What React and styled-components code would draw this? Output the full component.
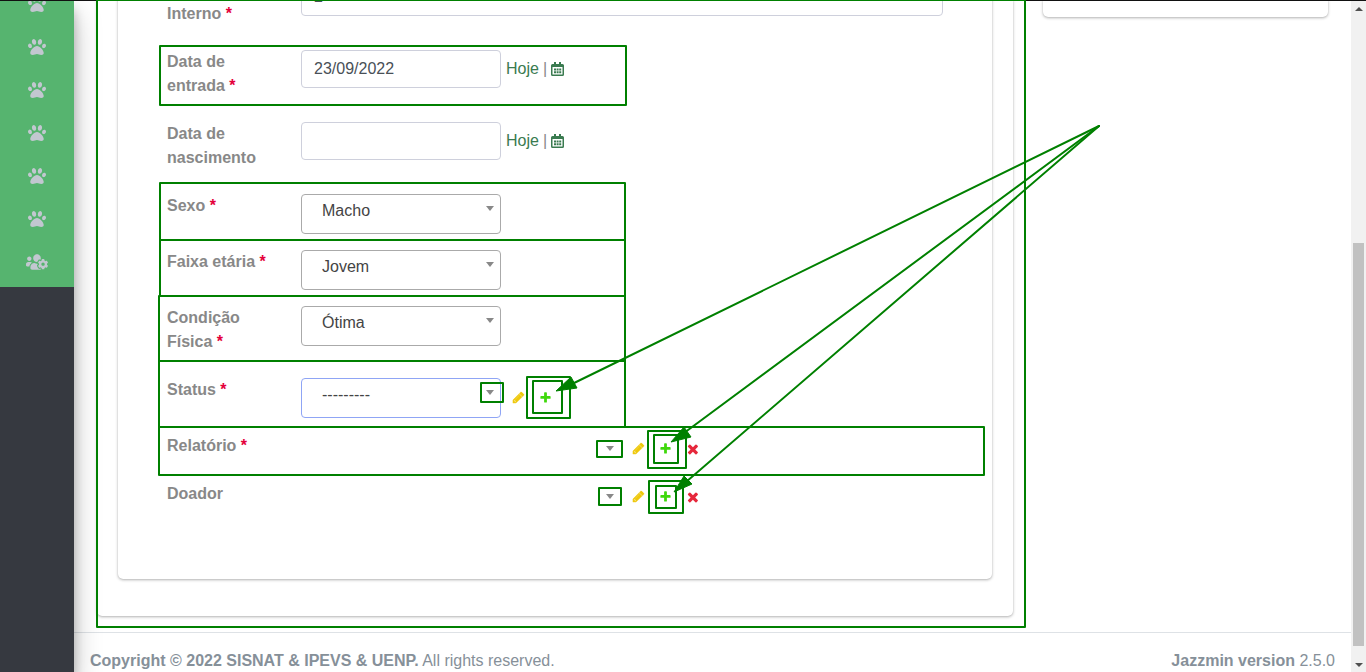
import React from "react";
import styled, { createGlobalStyle, css } from "styled-components";
import { FaPaw, FaUsersCog } from "react-icons/fa";

const GlobalStyle = createGlobalStyle`
  *, *::before, *::after { box-sizing: border-box; }
  body {
    margin: 0;
    background: #fff;
    color: #888;
    font: 16px/24px "Liberation Sans", Arial, sans-serif;
  }
`;

const Shell = styled.div`
  position: relative;
  display: flex;
  height: 100vh;
  overflow: hidden;
`;

const Sidebar = styled.aside`
  position: relative;
  z-index: 1;
  flex: 0 0 74px;
  background: #363940;
  box-shadow: 0 14px 28px rgba(0, 0, 0, 0.25), 0 10px 10px rgba(0, 0, 0, 0.22);
`;

const Nav = styled.nav`
  margin-top: -18px;
  padding-bottom: 4px;
  background: #56b46f;
`;

const NavLink = styled.a`
  display: flex;
  align-items: center;
  justify-content: center;
  height: 43px;
  color: #c2c7d0;

  svg {
    width: ${(p) => (p.$wide ? 22 : 18)}px;
    height: 18px;
  }
`;

const Page = styled.div`
  flex: 1;
  min-width: 0;
  display: flex;
  flex-direction: column;
`;

const Columns = styled.main`
  display: grid;
  grid-template-columns: minmax(0, 916fr) minmax(0, 285fr);
  align-items: start;
  gap: 30px;
  padding: 0 23px 16px;
`;

const Card = styled.section`
  border-radius: 0 0 5px 5px;
  background: #fff;
  box-shadow: 0 0 1px rgba(0, 0, 0, 0.125), 0 1px 3px rgba(0, 0, 0, 0.3);
`;

const FormCard = styled(Card)`
  padding: 0 21px 37px;
`;

const SideCard = styled(Card)`
  height: 17px;
`;

const Fieldset = styled(Card).attrs({ as: "form" })`
  margin: 0;
  padding: 0 49px;
`;

const Rows = styled.div`
  margin-top: -22px;
  padding-bottom: 49px;
`;

const Row = styled.div`
  display: grid;
  grid-template-columns: 120px minmax(0, 1fr);
  column-gap: 14px;
  align-items: start;
  margin-bottom: 16px;
`;

const Label = styled.label`
  display: block;
  padding: ${(p) => (p.$second ? 24 : 0)}px 0 8px;
  font-weight: 700;
`;

const Required = styled.span`
  color: #e4003a;
`;

const Controls = styled.div`
  display: flex;
  align-items: center;
`;

const TextInput = styled.input`
  width: ${(p) => (p.$full ? "100%" : "200px")};
  height: 38px;
  padding: 6px 12px;
  border: 1px solid #ced0dc;
  border-radius: 4px;
  background: #fff;
  color: #495057;
  font: inherit;
`;

const Shortcuts = styled.span`
  display: flex;
  align-items: center;
  gap: 4px;
  margin-left: 5px;
`;

const Link = styled.a`
  display: flex;
  color: #3a7b50;
  text-decoration: none;

  svg {
    width: 13px;
    height: 14px;
  }
`;

const SelectBox = styled.div`
  position: relative;
  width: ${(p) => (p.$bare ? 320 : 200)}px;

  &::after {
    content: "";
    position: absolute;
    top: 12px;
    right: 7px;
    border: solid transparent;
    border-width: 5px 4px 0;
    border-top-color: #888;
    pointer-events: none;
  }
`;

const Select = styled.select`
  display: block;
  width: 100%;
  height: 40px;
  padding: 0 20px 6px;
  border: 1px solid ${(p) => (p.$focused ? "#8fa5f5" : "#aaa")};
  border-radius: 4px;
  appearance: none;
  background: #fff;
  color: #444;
  font: inherit;
  ${(p) =>
    p.$bare &&
    css`
      height: 30px;
      padding: 0;
      border: 0;
    `}
`;

const Actions = styled.div`
  display: flex;
  align-items: center;
  gap: 14px;
  margin-left: 11px;
  padding-bottom: 2px;
`;

const ActionButton = styled.button`
  display: flex;
  padding: 0;
  border: 0;
  background: none;
  color: ${(p) => p.$color};

  svg {
    width: 13px;
    height: 13px;
  }
`;

const Footer = styled.footer`
  display: flex;
  justify-content: space-between;
  padding: 16px 16px 0;
  border-top: 1px solid #dee2e6;
  color: #869099;
`;

const Scrollbar = styled.div`
  flex: 0 0 15px;
  display: flex;
  flex-direction: column;
  align-items: center;
  justify-content: space-between;
  padding: 7px 0 5px;
  background: #f1f1f1;
`;

const ScrollArrow = styled.span`
  border: solid transparent;
  border-width: ${(p) => (p.$up ? "0 4px 4px" : "4px 4px 0")};
  border-top-color: ${(p) => (p.$up ? "transparent" : "#505050")};
  border-bottom-color: ${(p) => (p.$up ? "#505050" : "transparent")};
`;

const ScrollTrack = styled.div`
  flex: 1;
  display: flex;
  align-items: flex-end;
  margin: 6px 0 17px;
`;

const ScrollThumb = styled.div`
  width: 11px;
  height: 64%;
  background: #c1c1c1;
`;

const TopLine = styled.div`
  position: absolute;
  z-index: 2;
  inset: 0 0 auto;
  height: 1px;
  background: #111;
`;

const Markup = styled.svg`
  position: absolute;
  z-index: 3;
  top: 0;
  left: 0;
  width: 100%;
  height: 100%;
  overflow: visible;
  pointer-events: none;
`;

const glyphs = {
  pencil:
    "M491 1536l91-91-235-235-91 91v107h128v128h107zm523-928q0-22-22-22-10 0-17 7l-542 542q-7 7-7 17 0 22 22 22 10 0 17-7l542-542q7-7 7-17zm-54-192l416 416-832 832h-416v-416zm683 96q0 53-37 90l-166 166-416-416 166-165q36-38 90-38 53 0 91 38l235 234q37 39 37 91z",
  plus:
    "M1600 796v192q0 40-28 68t-68 28h-416v416q0 40-28 68t-68 28h-192q-40 0-68-28t-28-68v-416h-416q-40 0-68-28t-28-68v-192q0-40 28-68t68-28h416v-416q0-40 28-68t68-28h192q40 0 68 28t28 68v416h416q40 0 68 28t28 68z",
  cross:
    "M1490 1322q0 40-28 68l-136 136q-28 28-68 28t-68-28l-294-294-294 294q-28 28-68 28t-68-28l-136-136q-28-28-28-68t28-68l294-294-294-294q-28-28-28-68t28-68l136-136q28-28 68-28t68 28l294 294 294-294q28-28 68-28t68 28l136 136q28 28 28 68t-28 68l-294 294 294 294q28 28 28 68z",
};

function Glyph({ name }) {
  return (
    <svg viewBox={name === "cross" ? "80 80 1536 1536" : "0 0 1792 1792"} fill="currentColor" aria-hidden="true">
      {name === "pencil" && (
        <path d="M128 1248L1240 110L1690 560L544 1664H128z" fill="#f4e07a" stroke="#f4e07a" strokeWidth="90" strokeLinejoin="round" />
      )}
      <path d={glyphs[name]} />
    </svg>
  );
}

function CalendarIcon() {
  return (
    <svg viewBox="0 0 13 14" fill="currentColor" aria-hidden="true">
      <path
        fillRule="evenodd"
        d="M3 0h2v2h3V0h2v2h1.500a1.500 1.500 0 0 1 1.500 1.500v9a1.500 1.500 0 0 1-1.500 1.500h-10A1.500 1.500 0 0 1 0 12.500v-9A1.500 1.500 0 0 1 1.500 2H3zM1.500 5v7.500h10V5z"
      />
      <path d="M3 6.500h2v2H3zM5.600 6.500h2v2h-2zM8.200 6.500h2v2h-2zM3 9.200h2v2H3zM5.600 9.200h2v2h-2zM8.200 9.200h2v2h-2z" />
    </svg>
  );
}

function Field({ id, label, required, second, children }) {
  return (
    <Row>
      <Label htmlFor={id} $second={second}>
        {label} {required && <Required>*</Required>}
      </Label>
      <Controls>{children}</Controls>
    </Row>
  );
}

function DateField({ id, label, required, value }) {
  return (
    <Field id={id} label={label} required={required}>
      <TextInput id={id} defaultValue={value} />
      <Shortcuts>
        <Link href="#hoje">Hoje</Link>|
        <Link href="#calendario" aria-label="Calendário">
          <CalendarIcon />
        </Link>
      </Shortcuts>
    </Field>
  );
}

function SelectField({ id, label, required, value, bare, focused, actions, removable }) {
  return (
    <Field id={id} label={label} required={required}>
      <SelectBox $bare={bare}>
        <Select id={id} $bare={bare} $focused={focused}>
          {value && <option>{value}</option>}
        </Select>
      </SelectBox>
      {actions && (
        <Actions>
          <ActionButton type="button" $color="#efc80b" aria-label="Modificar">
            <Glyph name="pencil" />
          </ActionButton>
          <ActionButton type="button" $color="#3fd80c" aria-label="Adicionar">
            <Glyph name="plus" />
          </ActionButton>
          {removable && (
            <ActionButton type="button" $color="#e6283c" aria-label="Remover">
              <Glyph name="cross" />
            </ActionButton>
          )}
        </Actions>
      )}
    </Field>
  );
}

// Each box: left, top, right, bottom
const boxes = [
  [97, 0, 1025, 627],
  [160, 46, 626, 105],
  [160, 183, 625, 240],
  [160, 240, 625, 296],
  [159, 296, 625, 361],
  [159, 361, 625, 427],
  [159, 427, 984, 475],
  [481, 383, 503, 402],
  [527, 377, 570, 418],
  [533, 381, 562, 413],
  [597, 441, 622, 457],
  [648, 431, 686, 468],
  [654, 435, 678, 463],
  [599, 488, 621, 505],
  [649, 481, 683, 513],
  [656, 486, 676, 508],
];

const arrows = [
  { to: [570, 385], head: "556,391 571,377 577,388" },
  { to: [684, 433], head: "671,442 684,427 691,437" },
  { to: [686, 482], head: "674,492 684,476 692,484" },
];

function Annotations() {
  return (
    <Markup fill="none" stroke="#008000" strokeWidth="2" strokeLinejoin="round" aria-hidden="true">
      {boxes.map(([l, t, r, b]) => (
        <rect key={`${l}-${t}`} x={l} y={t} width={r - l} height={b - t} />
      ))}
      {arrows.map(({ to, head }) => (
        <g key={head}>
          <line x1="1099" y1="126" x2={to[0]} y2={to[1]} strokeLinecap="round" />
          <polygon points={head} fill="#008000" strokeWidth="1" />
        </g>
      ))}
    </Markup>
  );
}

export default function App() {
  return (
    <Shell>
      <GlobalStyle />
      <Sidebar>
        <Nav>
          {[1, 2, 3, 4, 5, 6].map((n) => (
            <NavLink key={n} href="#animais" aria-label="Animais">
              <FaPaw />
            </NavLink>
          ))}
          <NavLink href="#usuarios" aria-label="Usuários" $wide>
            <FaUsersCog />
          </NavLink>
        </Nav>
      </Sidebar>
      <Page>
        <Columns>
          <FormCard>
            <Fieldset>
              <Rows>
                <Field id="interno" label="Interno" required second>
                  <TextInput id="interno" defaultValue="2" $full />
                </Field>
                <DateField id="entrada" label="Data de entrada" required value="23/09/2022" />
                <DateField id="nascimento" label="Data de nascimento" />
                <SelectField id="sexo" label="Sexo" required value="Macho" />
                <SelectField id="faixa" label="Faixa etária" required value="Jovem" />
                <SelectField id="condicao" label="Condição Física" required value="Ótima" />
                <SelectField id="status" label="Status" required value="---------" focused actions />
                <SelectField id="relatorio" label="Relatório" required bare actions removable />
                <SelectField id="doador" label="Doador" bare actions removable />
              </Rows>
            </Fieldset>
          </FormCard>
          <SideCard />
        </Columns>
        <Footer>
          <span>
            <strong>Copyright © 2022 SISNAT &amp; IPEVS &amp; UENP.</strong> All rights reserved.
          </span>
          <span>
            <strong>Jazzmin version</strong> 2.5.0
          </span>
        </Footer>
      </Page>
      <Scrollbar aria-hidden="true">
        <ScrollArrow $up />
        <ScrollTrack>
          <ScrollThumb />
        </ScrollTrack>
        <ScrollArrow />
      </Scrollbar>
      <TopLine />
      <Annotations />
    </Shell>
  );
}
